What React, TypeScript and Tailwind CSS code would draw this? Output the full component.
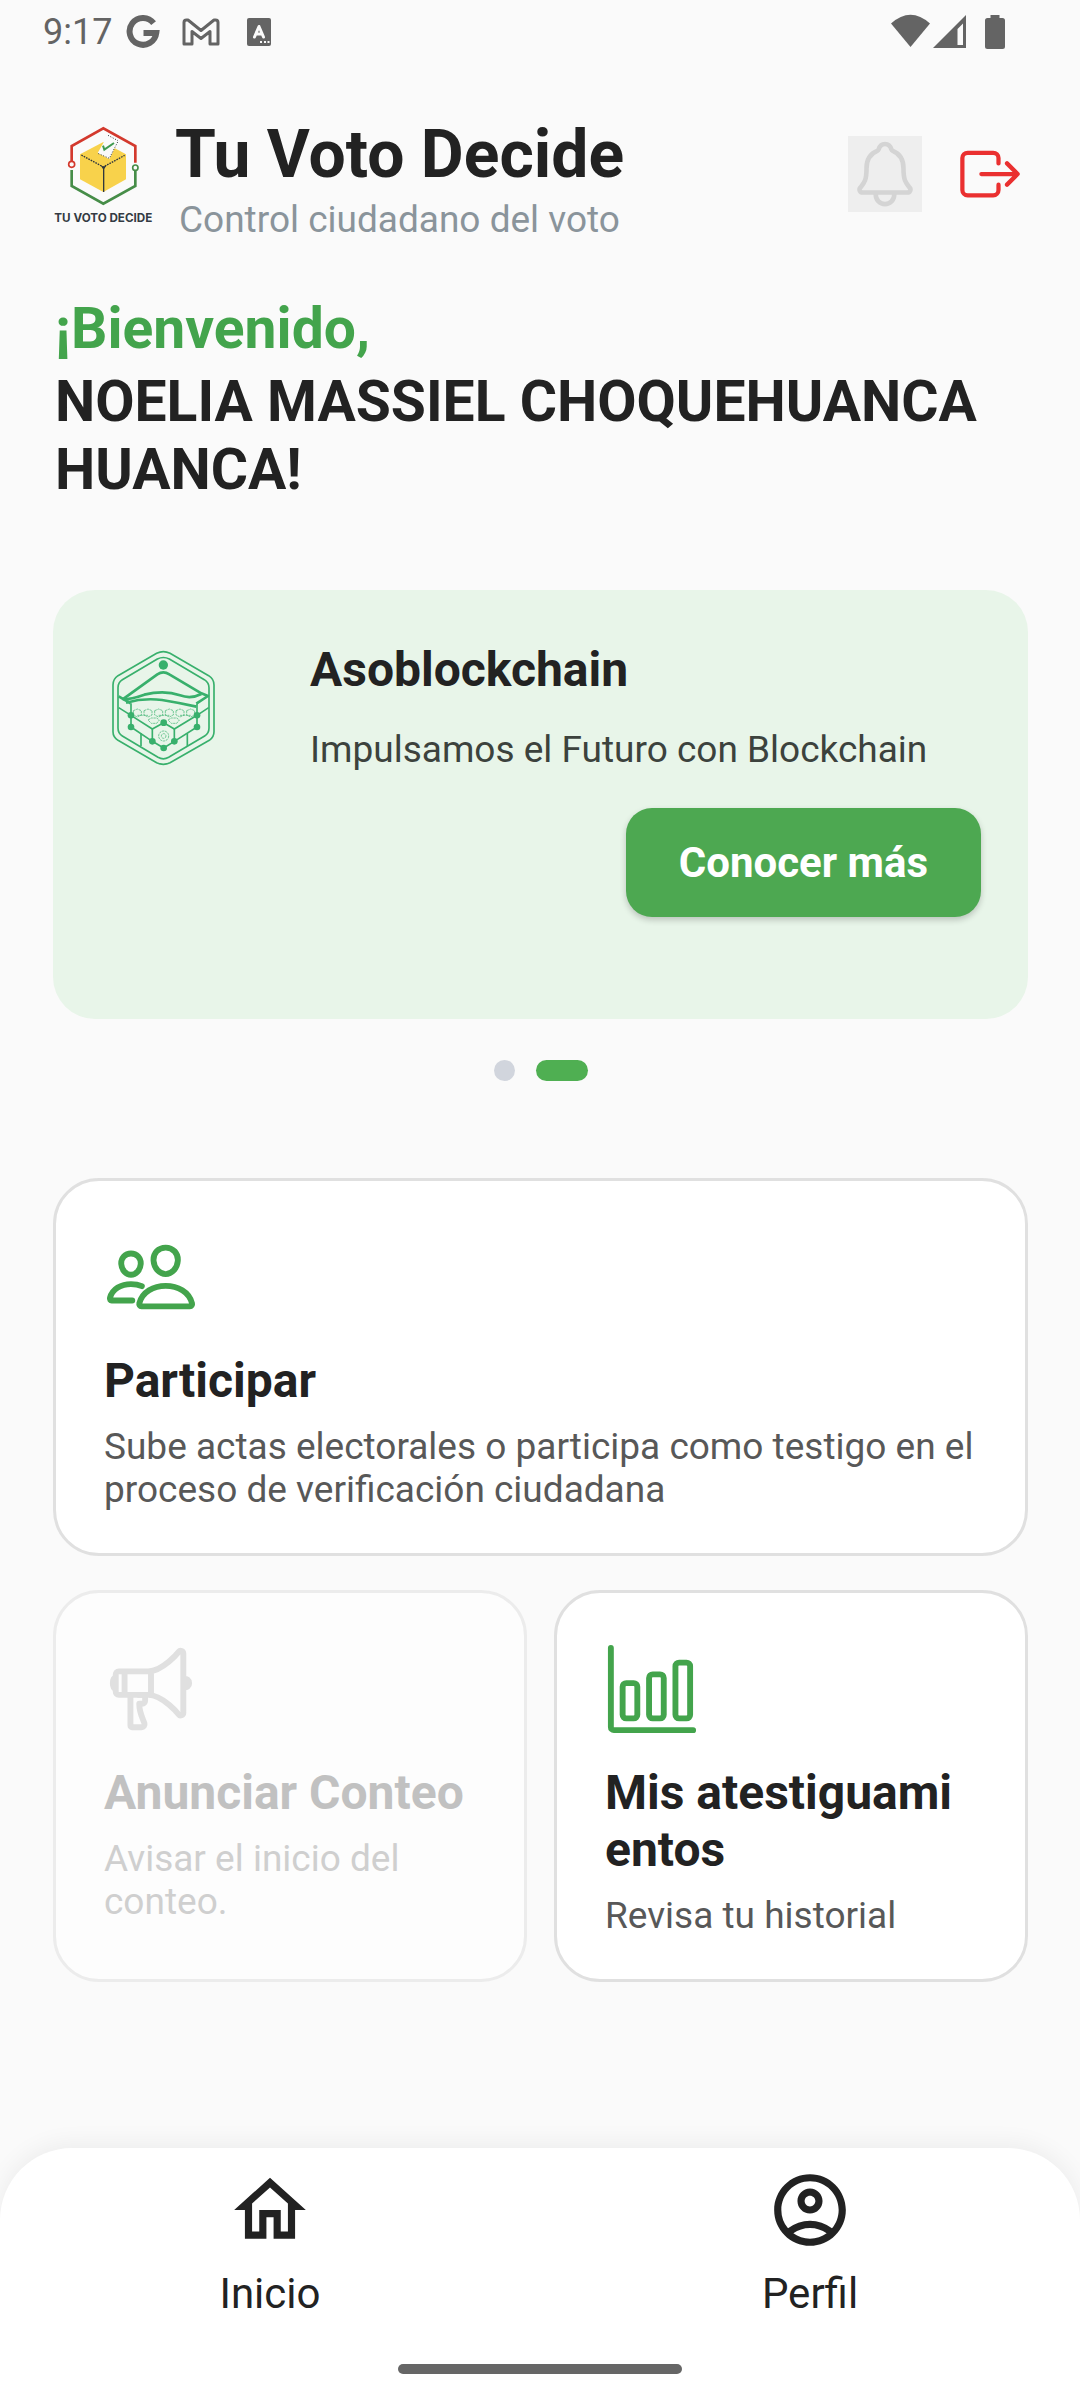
import type { ReactNode } from 'react';
import {
  IoBarChartOutline,
  IoExitOutline,
  IoMegaphoneOutline,
  IoNotificationsOutline,
  IoPeopleOutline,
} from 'react-icons/io5';
import { MdOutlineAccountCircle, MdOutlineHome } from 'react-icons/md';

function StatusBar() {
  return (
    <div className="flex h-[63px] items-center justify-between pr-[75px] pl-[43px] text-[#646464]">
      <div className="flex items-center">
        <span className="text-[36px] leading-[42px]">9:17</span>
        <svg className="ml-[14px] h-[34px] w-[34px]" viewBox="0 0 34 34" fill="none" stroke="currentColor" strokeWidth="6" aria-hidden="true">
          <path d="M27.6 8.2A13.4 13.4 0 1 0 30.3 18H17.5" />
        </svg>
        <svg className="ml-[22px] h-[28px] w-[38px]" viewBox="0 0 38 28" fill="none" stroke="currentColor" strokeWidth="3" strokeLinejoin="round" aria-hidden="true">
          <path d="M2 4.500Q2 2 4.500 2H6L19 12.500 32 2H33.500Q36 2 36 4.500V26H28V13.500L19 20.500 10 13.500V26H2Z" />
        </svg>
        <svg className="ml-[27px] h-[28px] w-[24px]" viewBox="0 0 24 28" aria-hidden="true">
          <rect width="24" height="28" rx="2" fill="currentColor" />
          <path d="M7.500 19L12 8.500 16.500 19M9 16H15" fill="none" stroke="#fafafa" strokeWidth="3" strokeLinecap="round" strokeLinejoin="round" />
          <path d="M13 24h2M17 24h2M20.500 24h2" stroke="#fafafa" strokeWidth="2" />
        </svg>
      </div>
      <svg className="h-[35px] w-[114px]" viewBox="0 0 114 35" fill="currentColor" aria-hidden="true">
        <path d="M0 9.500Q19.500-8 39 9.500L19.500 33Z" />
        <path fillRule="evenodd" d="M75 1V34H42ZM66.500 15V31H72V9.500Z" />
        <path d="M99.500 1h9v3h3q2.500 0 2.500 2.500v26q0 2.500-2.500 2.500h-15q-2.500 0-2.500-2.500v-26q0-2.500 2.500-2.500h3Z" />
      </svg>
    </div>
  );
}

function VoteLogo() {
  return (
    <svg className="h-[104px] w-[100px] shrink-0" viewBox="36 48 300 312" role="img" aria-label="Tu Voto Decide">
      <g fill="none" strokeWidth="8">
        <path d="M92 154V108L187 55 283 108V158" stroke="#d3392d" />
        <path d="M92 180V228L187 281 283 228V182" stroke="#468d48" />
        <circle cx="92" cy="163" r="9" stroke="#d3392d" strokeWidth="5" />
        <circle cx="283" cy="173" r="8" stroke="#468d48" strokeWidth="5" />
      </g>
      <path d="M117 133L187 96 255 133V208L187 246 117 208Z" fill="#f8d24b" />
      <path d="M201 74L232 92 205 147 170 129Z" fill="#fafafa" />
      <path d="M201 76L231 92M230 96L205 145 170 130" fill="none" stroke="#30373d" strokeWidth="3" strokeDasharray="3 5" />
      <path d="M186 107l4 12 29-20" fill="none" stroke="#3f9a50" strokeWidth="6" />
      <path d="M121 135L187 171 251 136" fill="none" stroke="#30373d" strokeWidth="4" strokeDasharray="5 3" />
      <path d="M178 165l9 5 10-5-7 12v69h-4v-69Z" fill="#30373d" />
      <text x="187" y="336" textAnchor="middle" className="fill-[#333b43] font-[Inter] text-[35px] font-bold">
        TU VOTO DECIDE
      </text>
    </svg>
  );
}

function BlockchainLogo() {
  return (
    <svg className="h-[116px] w-[126px] shrink-0" viewBox="0 30 378 348" fill="none" stroke="#38b06c" strokeWidth="5" strokeLinejoin="round" role="img" aria-label="Asoblockchain">
      <path d="M170 40q20-10 40 0L326 107q16 10 16 28V275q0 16-14 26L210 368q-20 10-40 0L54 301q-15-10-15-26V135q0-18 15-28Z" />
      <path d="M172 57q18-9 36 0L313 119q14 9 14 24V264q0 16-13 24L206 352q-16 9-32 0L67 288q-13-8-13-24V143q0-16 13-24Z" />
      <path d="M68 178L172 103q18-12 36 0L304 160 324 168 289 191" strokeWidth="8" />
      <path d="M56 169L92 190M68 178q25 0 65-14 60-15 107 2 33 12 64-4M78 188q54-15 108-8 50 8 103 20" strokeWidth="8" />
      <path d="M93 190V261L157 304 191 324 223 304 291 261V191M56 203L93 226 157 267 191 248 223 267 291 226 326 203" />
      <path d="M157 267V304M223 267V304M123 280V318M262 280V318" />
      <g strokeWidth="2" strokeDasharray="7 2">
        <path d="M100 212l12-5 12 5v13l-12 6-12-6ZM132 212l12-5 12 5v13l-12 6-12-6ZM164 212l12-5 12 5v13l-12 6-12-6ZM196 212l12-5 12 5v13l-12 6-12-6ZM228 212l12-5 12 5v13l-12 6-12-6ZM260 212l12-5 12 5v13l-12 6-12-6Z" />
        <path d="M112 226h32M176 226h32M240 226h32M144 240l10-6h16l8 6-8 10h-16ZM204 240l10-6h16l8 6-8 10h-16Z" />
        <circle cx="191" cy="288" r="15" />
        <circle cx="191" cy="288" r="7" />
      </g>
      <g fill="#38b06c" stroke="none">
        <circle cx="190" cy="75" r="14" />
        <circle cx="93" cy="226" r="10" />
        <circle cx="291" cy="226" r="10" />
        <circle cx="93" cy="261" r="10" />
        <circle cx="291" cy="261" r="10" />
        <circle cx="191" cy="248" r="10" />
        <circle cx="157" cy="304" r="10" />
        <circle cx="223" cy="304" r="10" />
        <circle cx="191" cy="324" r="10" />
      </g>
    </svg>
  );
}

function Header() {
  return (
    <header className="flex items-center pt-[52px] pr-1">
      <VoteLogo />
      <div className="ml-[22px] flex-1">
        <h1 className="text-[66px] leading-[80px] font-bold text-[#222]">Tu Voto Decide</h1>
        <p className="mt-[3px] pl-1 text-[37px] leading-[43px] text-[#8a949b]">Control ciudadano del voto</p>
      </div>
      <div className="mb-2 flex shrink-0 items-center gap-[34px]">
        <button type="button" disabled aria-label="Notificaciones" className="flex h-[76px] w-[74px] items-center justify-center bg-[#eee] text-[#d4d4d4]">
          <IoNotificationsOutline className="size-[74px]" />
        </button>
        <button type="button" aria-label="Cerrar sesión" className="text-[#ea3030]">
          <IoExitOutline className="size-[68px]" />
        </button>
      </div>
    </header>
  );
}

type ActionCardProps = {
  icon: ReactNode;
  title: string;
  text: string;
  disabled?: boolean;
  className?: string;
};

function ActionCard({ icon, title, text, disabled = false, className = '' }: ActionCardProps) {
  const tone = disabled ? 'border-[#ececec] bg-[#fdfdfd]' : 'border-[#e0e0e0] bg-white';
  return (
    <button
      type="button"
      disabled={disabled}
      className={`flex flex-col items-start rounded-[46px] border-[3px] px-12 pt-[49px] pb-[42px] text-left ${tone} ${className}`}
    >
      <span className={disabled ? 'text-[#e0e0e0]' : 'text-[#43a44c]'}>{icon}</span>
      <span className={`mt-7 text-[48px] leading-[57px] font-bold break-all ${disabled ? 'text-[#c1c1c1]' : 'text-[#222]'}`}>{title}</span>
      <span className={`mt-4 text-[37px] leading-[43px] ${disabled ? 'text-[#cfcfcf]' : 'text-[#585858]'}`}>{text}</span>
    </button>
  );
}

export default function App() {
  return (
    <div className="flex min-h-screen flex-col bg-[#fafafa] font-[Roboto,sans-serif]">
      <StatusBar />
      <div className="pr-[52px] pl-[53px]">
        <Header />
        <main>
          <h2 className="mt-[54px] pl-[2px] text-[57px] leading-[68px] font-bold">
            <span className="block text-[#43a44c]">¡Bienvenido,</span>
            <span className="mt-[5px] block text-[#222]">NOELIA MASSIEL CHOQUEHUANCA HUANCA!</span>
          </h2>

          <section className="mt-[86px] flex items-start gap-[84px] rounded-[42px] bg-[#e8f5e9] px-[47px] pt-[52px] pb-[102px]">
            <div className="mt-2 shrink-0">
              <BlockchainLogo />
            </div>
            <div className="flex flex-1 flex-col">
              <h3 className="text-[48px] leading-[56px] font-bold text-[#222]">Asoblockchain</h3>
              <p className="mt-[30px] text-[37px] leading-[43px] text-[#3c423d]">Impulsamos el Futuro con Blockchain</p>
              <button type="button" className="mt-[37px] self-end rounded-[26px] bg-[#4da851] px-[53px] py-[30px] text-[42px] leading-[49px] font-bold text-white shadow-[0_3px_6px_rgba(0,0,0,0.2)]">
                Conocer más
              </button>
            </div>
          </section>

          <div className="mt-[41px] flex justify-center gap-[21px]">
            <button type="button" aria-label="Diapositiva 1" className="h-[21px] w-[21px] rounded-full bg-[#d1d5dd]" />
            <button type="button" aria-label="Diapositiva 2" className="h-[21px] w-[52px] rounded-full bg-[#4faf52]" />
          </div>

          <div className="mt-[97px] grid grid-cols-2 gap-x-[27px] gap-y-[34px] pb-12">
            <ActionCard
              className="col-span-2"
              icon={<IoPeopleOutline className="size-[94px]" />}
              title="Participar"
              text="Sube actas electorales o participa como testigo en el proceso de verificación ciudadana"
            />
            <ActionCard
              disabled
              icon={<IoMegaphoneOutline className="size-[94px]" />}
              title="Anunciar Conteo"
              text="Avisar el inicio del conteo."
            />
            <ActionCard
              icon={<IoBarChartOutline className="size-[94px]" />}
              title="Mis atestiguamientos"
              text="Revisa tu historial"
            />
          </div>
        </main>
      </div>

      <footer className="mt-auto rounded-t-[72px] bg-white pt-[19px] pb-[26px] text-[#222] shadow-[0_-4px_24px_rgba(0,0,0,0.06)]">
        <nav className="grid grid-cols-2 text-[42px] leading-[49px]">
          <a href="#inicio" className="flex flex-col items-center gap-4">
            <MdOutlineHome className="size-[86px]" />
            Inicio
          </a>
          <a href="#perfil" className="flex flex-col items-center gap-4">
            <MdOutlineAccountCircle className="size-[86px]" />
            Perfil
          </a>
        </nav>
        <div className="mx-auto mt-[46px] h-[10px] w-[284px] rounded-full bg-[#666]" />
      </footer>
    </div>
  );
}
